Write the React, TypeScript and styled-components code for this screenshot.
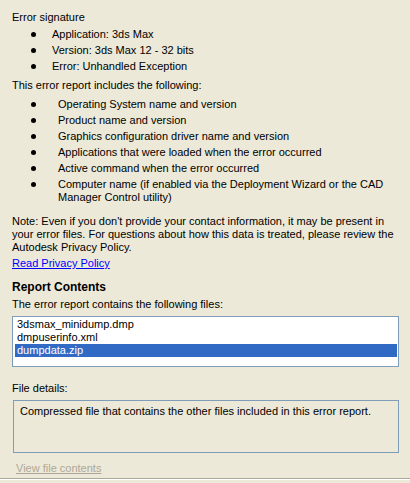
import React from 'react';
import styled, { createGlobalStyle } from 'styled-components';

const GlobalStyle = createGlobalStyle`
  html, body {
    margin: 0;
    padding: 0;
    background: #ece9d8;
  }
  body {
    font-family: "Liberation Sans", Arial, sans-serif;
    font-size: 11px;
    color: #000;
  }
`;

const Page = styled.div`
  width: 410px;
  height: 483px;
  box-sizing: border-box;
  padding: 11px 11px 0 12px;
  display: flex;
  flex-direction: column;
  overflow: hidden;
`;

const Text = styled.div<{ $top?: number }>`
  line-height: 13px;
  margin-top: ${(p) => p.$top ?? 0}px;
`;

const List = styled.ul<{ $top: number }>`
  list-style: none;
  margin: ${(p) => p.$top}px 0 0 0;
  padding: 0;
  display: flex;
  flex-direction: column;
`;

const Item = styled.li<{ $indent: number; $gap: number }>`
  position: relative;
  line-height: 13px;
  padding-left: ${(p) => p.$indent}px;
  & + & {
    margin-top: ${(p) => p.$gap}px;
  }
  &::before {
    content: '';
    position: absolute;
    left: 19px;
    top: 4px;
    width: 5px;
    height: 5px;
    border-radius: 50%;
    background: #000;
  }
`;

const Link = styled.a`
  color: #0000ff;
  text-decoration: underline;
  line-height: 13px;
  margin-top: 3px;
  align-self: flex-start;
  cursor: pointer;
`;

const Heading = styled.div`
  font-weight: bold;
  font-size: 12px;
  line-height: 14px;
  margin-top: 10px;
`;

const ListBox = styled.div`
  margin-top: 5px;
  height: 51px;
  box-sizing: border-box;
  border: 1px solid #7f9db9;
  background: #fff;
  padding: 1px 1px 0 2px;
  display: flex;
  flex-direction: column;
`;

const Row = styled.div<{ $selected?: boolean }>`
  height: 13px;
  line-height: 13px;
  padding-left: 2px;
  background: ${(p) => (p.$selected ? '#316ac5' : 'transparent')};
  color: ${(p) => (p.$selected ? '#fff' : '#000')};
`;

const DetailsBox = styled.div`
  margin-top: 5px;
  height: 53px;
  box-sizing: border-box;
  margin-left: 1px;
  border: 1px solid #7f9db9;
  padding: 4px 6px;
  line-height: 13px;
`;

const DisabledLink = styled.span`
  color: #aca899;
  text-decoration: underline;
  line-height: 13px;
  margin-top: 9px;
  margin-left: 4px;
  align-self: flex-start;
`;

const Separator = styled.div`
  margin: 3px -11px 0 -12px;
  border-top: 1px solid #aca899;
  border-bottom: 1px solid #fff;
`;

const signature = ['Application: 3ds Max', 'Version: 3ds Max 12 - 32 bits', 'Error: Unhandled Exception'];

const includes = [
  'Operating System name and version',
  'Product name and version',
  'Graphics configuration driver name and version',
  'Applications that were loaded when the error occurred',
  'Active command when the error occurred',
  'Computer name (if enabled via the Deployment Wizard or the CAD Manager Control utility)',
];

const files = ['3dsmax_minidump.dmp', 'dmpuserinfo.xml', 'dumpdata.zip'];

export default function App() {
  return (
    <>
      <GlobalStyle />
      <Page>
        <Text>Error signature</Text>
        <List $top={4}>
          {signature.map((s) => (
            <Item key={s} $indent={40} $gap={2}>
              {s}
            </Item>
          ))}
        </List>
        <Text $top={6}>This error report includes the following:</Text>
        <List $top={6}>
          {includes.map((s) => (
            <Item key={s} $indent={46} $gap={3}>
              {s}
            </Item>
          ))}
        </List>
        <Text $top={11}>
          Note: Even if you don't provide your contact information, it may be present in your error files. For
          questions about how this data is treated, please review the Autodesk Privacy Policy.
        </Text>
        <Link>Read Privacy Policy</Link>
        <Heading>Report Contents</Heading>
        <Text $top={4}>The error report contains the following files:</Text>
        <ListBox>
          {files.map((f, i) => (
            <Row key={f} $selected={i === 2}>
              {f}
            </Row>
          ))}
        </ListBox>
        <Text $top={15}>File details:</Text>
        <DetailsBox>Compressed file that contains the other files included in this error report.</DetailsBox>
        <DisabledLink>View file contents</DisabledLink>
        <Separator />
      </Page>
    </>
  );
}
